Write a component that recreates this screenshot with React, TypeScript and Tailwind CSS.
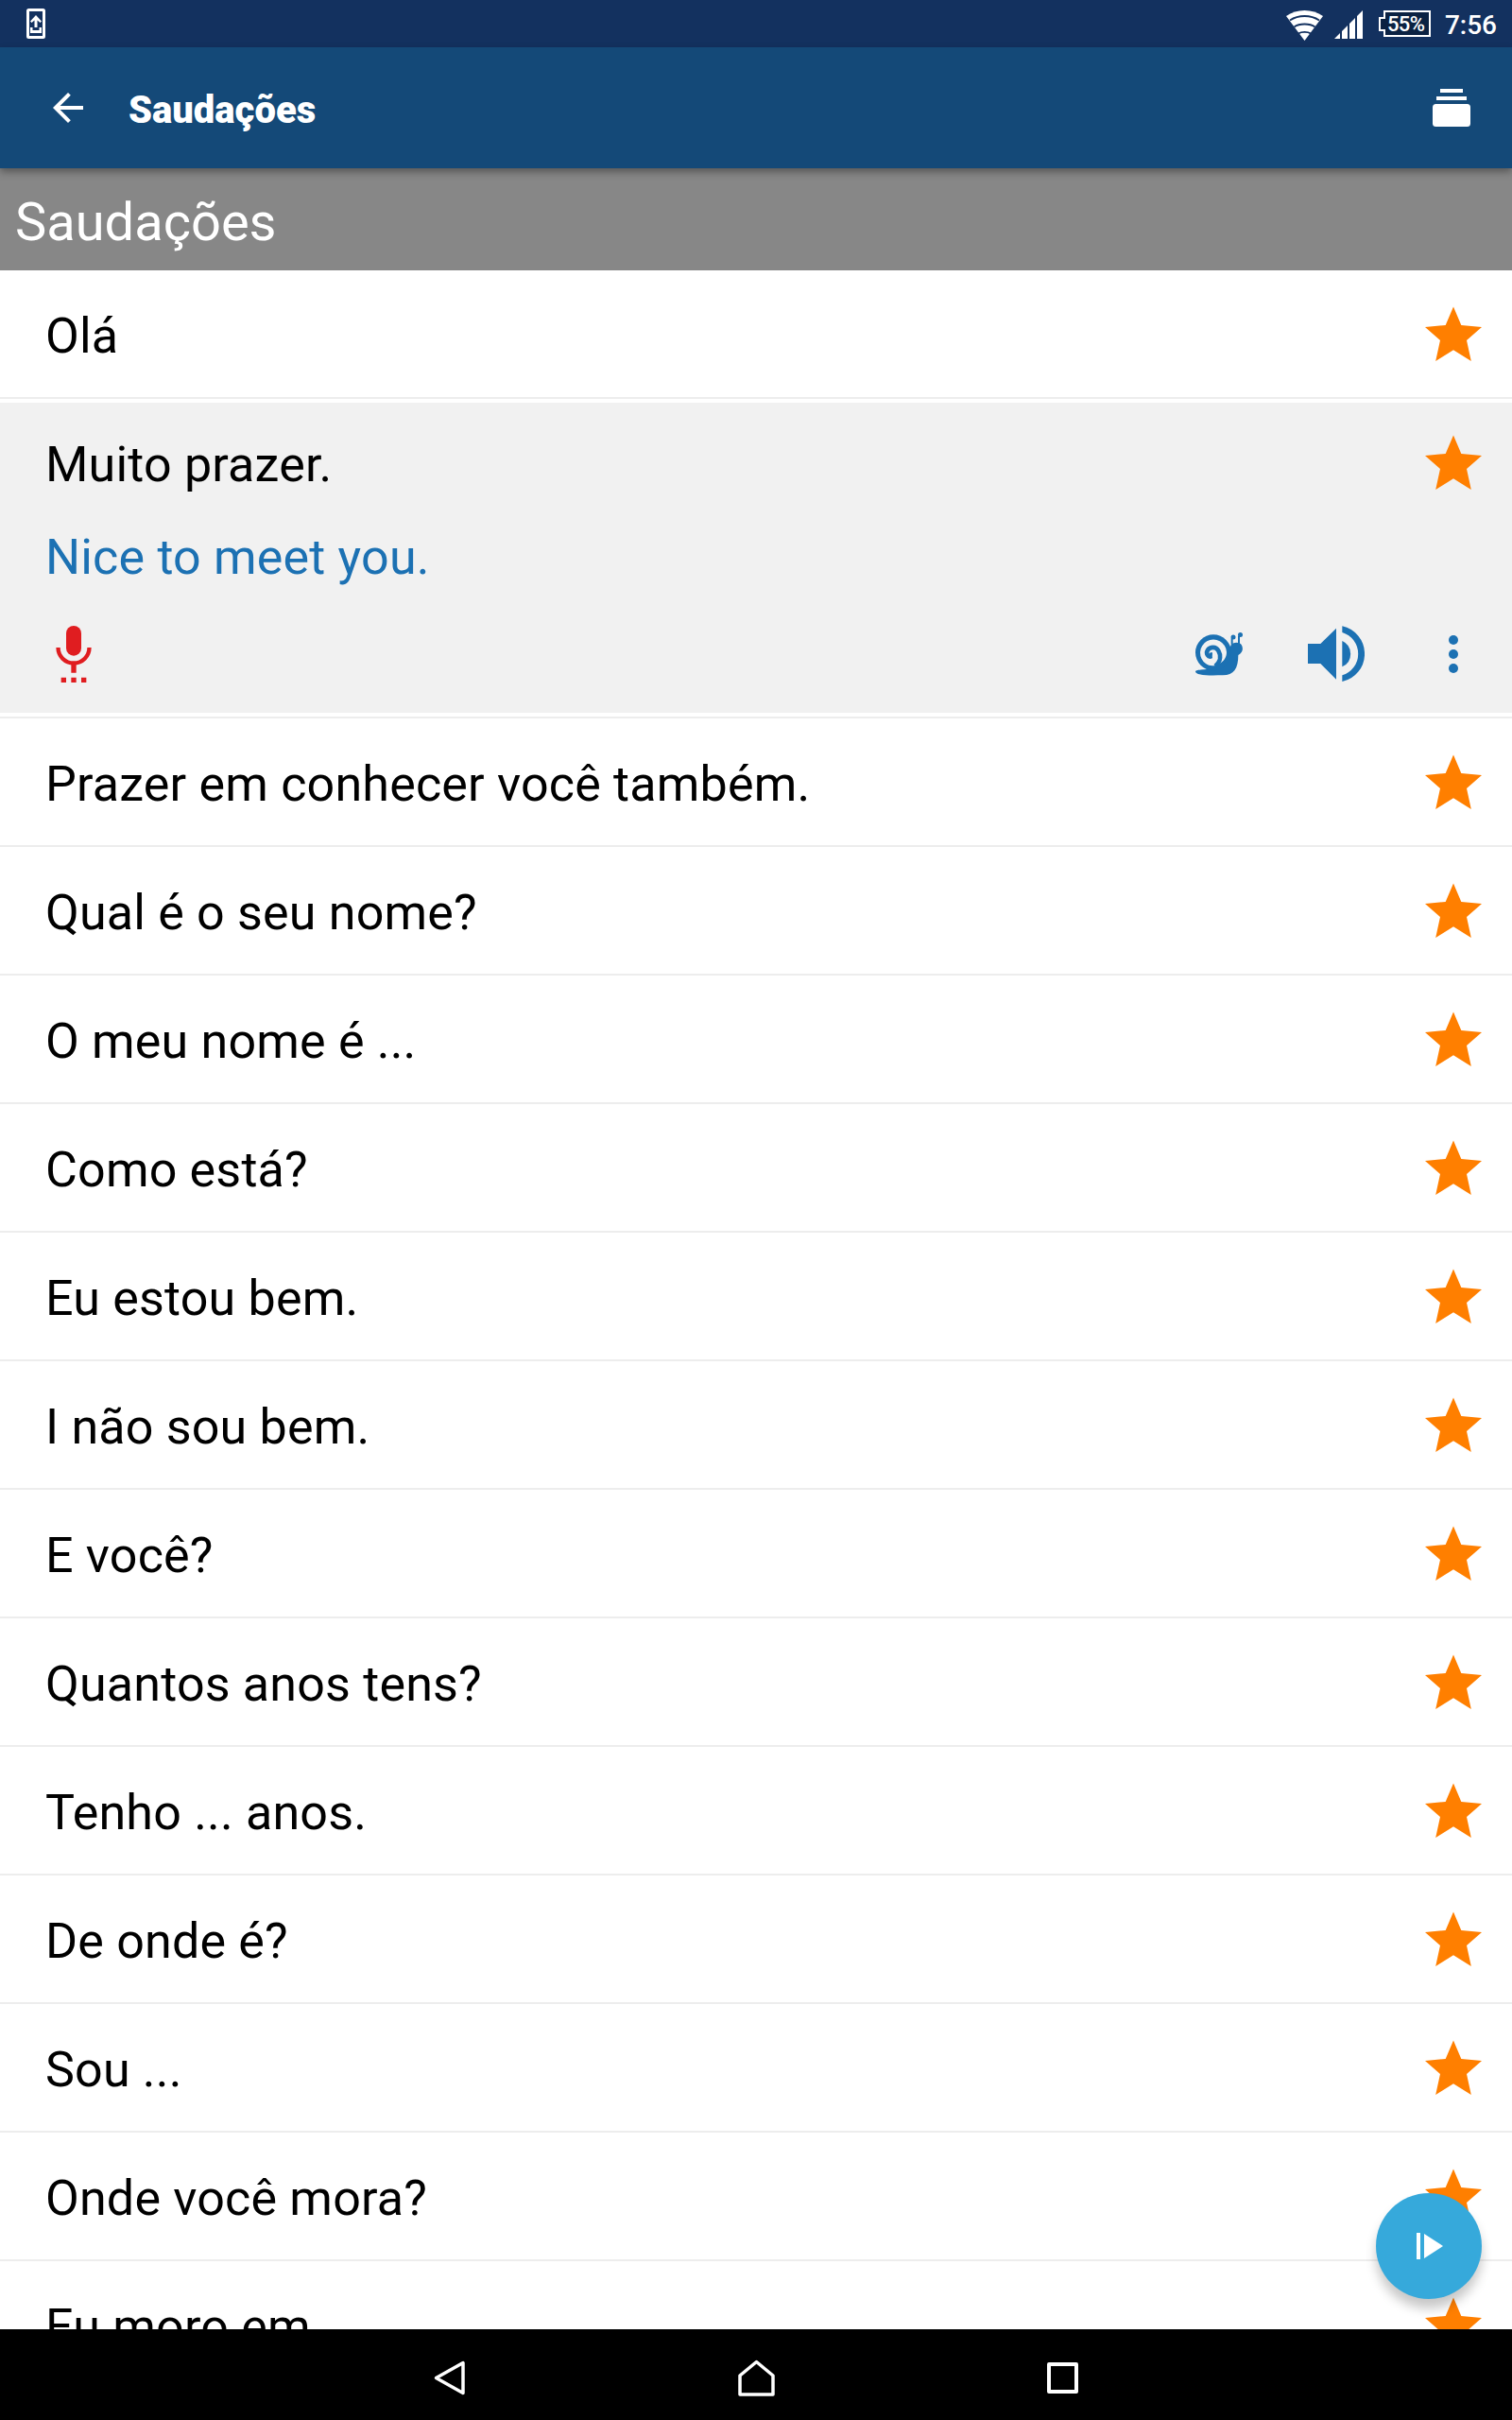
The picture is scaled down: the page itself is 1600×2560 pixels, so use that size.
interface Phrase {
  text: string;
  translation?: string;
}

const phrases: Phrase[] = [
  { text: "Olá" },
  { text: "Muito prazer.", translation: "Nice to meet you." },
  { text: "Prazer em conhecer você também." },
  { text: "Qual é o seu nome?" },
  { text: "O meu nome é ..." },
  { text: "Como está?" },
  { text: "Eu estou bem." },
  { text: "I não sou bem." },
  { text: "E você?" },
  { text: "Quantos anos tens?" },
  { text: "Tenho ... anos." },
  { text: "De onde é?" },
  { text: "Sou ..." },
  { text: "Onde você mora?" },
  { text: "Eu moro em ..." },
];

function StarIcon() {
  return (
    <svg viewBox="0 0 60 58" className="h-[58px] w-[60px]" fill="#ff7f00">
      <path d="M30 .5 38.3 20 60 22 44 36 48.8 58 30 46.3 11.2 58 16 36 0 22 21.7 20z" />
    </svg>
  );
}

function MicIcon() {
  return (
    <svg viewBox="87 66 114 180" className="h-[60px] w-[38px]" fill="#e01d20">
      <rect x="120" y="66" width="48" height="95" rx="24" />
      <path d="M94.5 135a49.5 49.5 0 0 0 99 0" fill="none" stroke="#e01d20" strokeWidth="13" />
      <path d="M136 186h16v29h-16zM104 230h16v16h-16zM136 230h16v16h-16zM168 230h16v16h-16z" />
    </svg>
  );
}

function SnailIcon() {
  return (
    <svg viewBox="75 88 150 138" className="h-[46px] w-[50px]" fill="#1c71b3">
      <path d="M75 212C76 206 95 207 112 205L140 196C155 188 172 172 180 150L188 128C192 119 214 116 221 127C227 138 227 150 211 160C211 202 197 224 162 224C122 225 76 226 75 212z" />
      <circle cx="132" cy="152" r="57" />
      <path d="M149 189C164 180 174 168 174 150A42 42 0 1 0 108 187C120 196 136 195 149 189z" fill="#f1f1f1" />
      <path
        d="M138 195C158 178 155 158 148 146C140 132 122 133 114 144C107 156 116 168 126 163"
        fill="none"
        stroke="#1c71b3"
        strokeWidth="14"
      />
      <path d="M119 155q9-8 10-1l-1 16-9 2z" />
      <path d="M191 126v-19M213 124V99" stroke="#1c71b3" strokeWidth="6" />
      <circle cx="195" cy="103" r="7.5" />
      <circle cx="217.500" cy="95.500" r="7.5" />
    </svg>
  );
}

function SpeakerIcon() {
  return (
    <svg viewBox="432 65 180 177" className="h-[59px] w-[60px]" fill="#1c71b3">
      <path d="M432 122h40l50-49v162l-50-50h-40z" />
      <path d="M541 113a45 45 0 0 1 0 82z" />
      <path d="M541 66a90 90 0 0 1 0 176v-20a71 71 0 0 0 0-136z" />
    </svg>
  );
}

function MoreIcon() {
  return (
    <svg viewBox="0 0 10 40" className="h-10 w-2.5" fill="#1c71b3">
      <circle cx="5" cy="5" r="5" />
      <circle cx="5" cy="20" r="5" />
      <circle cx="5" cy="35" r="5" />
    </svg>
  );
}

function StatusBar() {
  return (
    <div className="flex h-[50px] shrink-0 items-start bg-[#13315f] pr-4 pl-7 text-white">
      <svg viewBox="0 0 20 32" className="mt-[9px] h-8 w-5" fill="white">
        <rect x="1.500" y="1.500" width="17" height="29" rx="1" fill="none" stroke="white" strokeWidth="3" />
        <path d="M10 7l6 6.500-1.500 1.500-3-2.500V20h-3v-7.500l-3 2.500L4 13.500zM4 20h2.500v3h7v-3H16v6H4z" />
      </svg>
      <svg viewBox="0 0 39 32" className="mt-[11px] ml-auto h-8 w-[39px]">
        <path d="M0 6C11-2 28-2 39 6L19.500 32z" fill="white" />
        <path
          d="M4 10.500C13 4.500 26 4.500 35 10.500M8.500 17.500C14 13.500 25 13.500 30.500 17.500M13 24.500C16 22.300 23 22.300 26 24.500"
          fill="none"
          stroke="#13315f"
          strokeWidth="1.8"
        />
      </svg>
      <svg viewBox="0 0 30 30" className="mt-[11px] ml-3 h-[30px] w-[30px]" fill="white">
        <path d="M0 30 6 24v6zM8 22l6-6v14H8zM16 14l6-6v22h-6zM24 6l6-6v30h-6z" />
      </svg>
      <div className="relative mt-[11px] ml-[17px] h-7 w-[55px]">
        <svg viewBox="0 0 55 28" className="h-7 w-[55px]">
          <path d="M6 1h48v26H6v-6H1V8h5z" fill="#0b2242" stroke="white" strokeWidth="2" />
        </svg>
        <span className="absolute top-[4px] left-[9px] text-[22px] leading-[22px] font-medium tracking-[-0.6px]">
          55%
        </span>
      </div>
      <span className="mt-[10px] ml-[15px] text-[28px] leading-[34px] font-medium">7:56</span>
    </div>
  );
}

function AppBar() {
  return (
    <header className="relative z-10 flex h-32 shrink-0 items-center bg-[#144978] pr-11 pl-12 text-white shadow-[0_4px_8px_rgba(0,0,0,0.35)]">
      <svg viewBox="0 0 24 24" className="h-12 w-12" fill="white">
        <path d="M20 11H7.830l5.590-5.590L12 4l-8 8 8 8 1.410-1.410L7.830 13H20z" />
      </svg>
      <h1 className="mt-[6px] ml-10 text-[40px] leading-[48px] font-black">Saudações</h1>
      <svg viewBox="0 0 40 40" className="ml-auto h-10 w-10" fill="white">
        <path d="M8 0h24v4H8zM4 8h32v4H4z" />
        <rect y="16" width="40" height="24" rx="3.5" />
      </svg>
    </header>
  );
}

function PhraseLine({ text }: { text: string }) {
  return (
    <div className="flex h-[134px] items-center justify-between pr-8 pl-12">
      <span className="pt-1.5 text-[52px] leading-[60px] tracking-[0.19px]">{text}</span>
      <StarIcon />
    </div>
  );
}

function PhraseRow({ phrase }: { phrase: Phrase }) {
  if (!phrase.translation) {
    return (
      <li className="border-b-2 border-[#ededed]">
        <PhraseLine text={phrase.text} />
      </li>
    );
  }

  return (
    <li className="h-[338px] border-b-2 border-[#ededed] py-1">
      <div className="h-[328px] bg-[#f1f1f1]">
        <div className="-translate-y-1">
          <PhraseLine text={phrase.text} />
          <p className="pt-1 pl-12 text-[52px] leading-[60px] tracking-[0.19px] text-[#1c71b3]">
            {phrase.translation}
          </p>
          <div className="mt-[42px] flex h-[60px] items-center pr-[57px] pl-[59px]">
            <MicIcon />
            <div className="ml-auto flex items-center">
              <SnailIcon />
              <div className="-mt-px ml-[69px]">
                <SpeakerIcon />
              </div>
              <div className="ml-[89px]">
                <MoreIcon />
              </div>
            </div>
          </div>
        </div>
      </div>
    </li>
  );
}

function NavBar() {
  return (
    <nav className="flex h-24 shrink-0 items-center justify-between bg-black pt-1.5 pr-[459px] pl-[459px]">
      <svg viewBox="0 0 34 37" className="h-[37px] w-[34px]" fill="none" stroke="white" strokeWidth="3.5" strokeLinejoin="round">
        <path d="M31 2.500v32L2.500 18.500z" />
      </svg>
      <svg viewBox="0 0 39 39" className="h-[39px] w-[39px]" fill="none" stroke="white" strokeWidth="3.5" strokeLinejoin="round">
        <path d="M19.500 2.500 37 17v20H2V17z" />
      </svg>
      <svg viewBox="0 0 33 33" className="h-[33px] w-[33px]" fill="none" stroke="white" strokeWidth="4" strokeLinejoin="round">
        <path d="M2 2h29v29H2z" />
      </svg>
    </nav>
  );
}

export default function App() {
  return (
    <div className="relative flex h-[2560px] w-[1600px] flex-col overflow-hidden bg-white font-[Roboto,sans-serif] text-black">
      <StatusBar />
      <AppBar />
      <h2 className="flex h-[108px] shrink-0 items-center bg-[#878787] pt-1.5 pl-4 text-[56px] leading-[66px] text-white">
        Saudações
      </h2>
      <ul className="min-h-0 flex-1 overflow-hidden">
        {phrases.map((phrase) => (
          <PhraseRow key={phrase.text} phrase={phrase} />
        ))}
      </ul>
      <NavBar />

      {/* Play all */}
      <button className="absolute right-8 bottom-32 flex h-28 w-28 items-center justify-center rounded-full bg-[#36a9db] pl-0.5 shadow-[0_10px_12px_rgba(0,0,0,0.22)]">
        <svg viewBox="0 0 28 28" className="h-7 w-7" fill="white">
          <path d="M0 0h4v28H0zM8 1l20 13L8 27z" />
        </svg>
      </button>
    </div>
  );
}
